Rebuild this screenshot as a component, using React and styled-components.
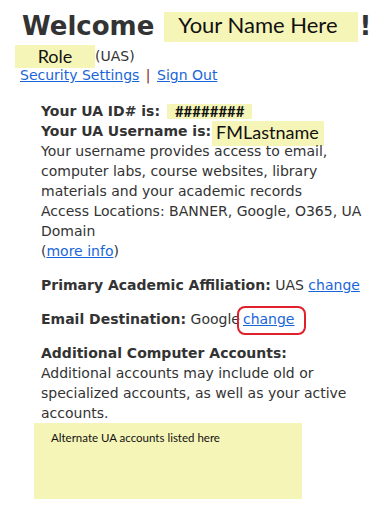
import React from "react";
import styled, { createGlobalStyle } from "styled-components";

const Global = createGlobalStyle`
  html, body { margin: 0; padding: 0; background: #fff; }
  body { font-family: "DejaVu Sans", Verdana, sans-serif; color: #333; }
`;

const HL = "#f6f5b8";

const Page = styled.div`
  width: 391px;
  height: 510px;
  box-sizing: border-box;
  padding: 11px 0 0 20px;
  overflow: hidden;
`;

const HeaderRow = styled.div`
  display: flex;
  align-items: flex-start;
  height: 34px;
`;

const Welcome = styled.h1`
  margin: 0 0 0 2px;
  font-family: "DejaVu Sans", Verdana, sans-serif;
  font-size: 26px;
  line-height: 30px;
  font-weight: bold;
  color: #333;
`;

const NameBox = styled.span`
  margin: 1px 2px 0 10px;
  padding: 0 20px 4px 14px;
  background: ${HL};
  font-family: Lato, "Open Sans", sans-serif;
  font-size: 22px;
  line-height: 26px;
  color: #111;
`;

const Bang = styled.span`
  font-size: 26px;
  line-height: 30px;
  font-weight: bold;
  color: #333;
`;

const RoleRow = styled.div`
  display: flex;
  align-items: flex-start;
  margin-left: -5px;
  height: 23px;
`;

const RoleBox = styled.span`
  width: 80px;
  text-align: center;
  background: ${HL};
  font-family: Lato, "Open Sans", sans-serif;
  font-size: 18px;
  line-height: 23px;
  color: #111;
`;

const Muted = styled.span`
  font-size: 14px;
  line-height: 23px;
  color: #333;
`;

const LinkRow = styled.div`
  font-size: 14px;
  line-height: 14px;
`;

const Link = styled.a`
  color: #1a66d8;
  text-decoration: underline;
  cursor: pointer;
`;

const Sep = styled.span`
  color: #8a2a1e;
  margin: 0 2px;
`;

const Content = styled.div`
  margin: 19px 0 0 21px;
  width: 335px;
  font-size: 14px;
  line-height: 20px;
  color: #333;
`;

const Para = styled.p`
  margin: 0;
  & + & { margin-top: 14px; }
`;

const Label = styled.b`
  font-weight: bold;
`;

const HashBox = styled.span`
  display: inline-block;
  margin-left: 2px;
  padding: 0 7px 0 8px;
  height: 15px;
  line-height: 15px;
  vertical-align: -1px;
  background: ${HL};
  font-family: Lato, "Open Sans", sans-serif;
  font-size: 15px;
  font-weight: bold;
  color: #111;
`;

const UserBox = styled.span`
  margin-left: 1px;
  padding: 0 5px 3px 4px;
  background: ${HL};
  font-family: Lato, "Open Sans", sans-serif;
  font-size: 18px;
  line-height: 18px;
  vertical-align: -3px;
  color: #111;
`;

const UserLine = styled.span`
  display: inline-block;
  height: 21px;
`;

const Ringed = styled.span`
  position: relative;
  margin-left: 3px;
`;

const Ring = styled.span`
  position: absolute;
  left: -6px;
  right: -12px;
  top: -5px;
  bottom: -8px;
  border: 2.5px solid #e0202c;
  border-radius: 8px;
  pointer-events: none;
`;

const AltBox = styled.div`
  margin-left: -7px;
  width: 268px;
  height: 76px;
  box-sizing: border-box;
  padding: 8px 0 0 17px;
  background: ${HL};
  font-family: Lato, "Open Sans", sans-serif;
  font-size: 11.5px;
  line-height: 14px;
  color: #111;
`;

export default function App() {
  return (
    <Page>
      <Global />
      <HeaderRow>
        <Welcome>Welcome</Welcome>
        <NameBox>Your Name Here</NameBox>
        <Bang>!</Bang>
      </HeaderRow>
      <RoleRow>
        <RoleBox>Role</RoleBox>
        <Muted>(UAS)</Muted>
      </RoleRow>
      <LinkRow>
        <Link>Security Settings</Link>
        <Sep> | </Sep>
        <Link>Sign Out</Link>
      </LinkRow>
      <Content>
        <Para>
          <Label>Your UA ID# is: </Label>
          <HashBox>########</HashBox>
          <br />
          <Label>Your UA Username is:</Label>
          <UserBox>FMLastname</UserBox>
          <br />
          Your username provides access to email, computer labs, course
          websites, library materials and your academic records
          <br />
          Access Locations: BANNER, Google, O365, UA Domain
          <br />
          (<Link>more info</Link>)
        </Para>
        <Para>
          <Label>Primary Academic Affiliation:</Label> UAS <Link>change</Link>
        </Para>
        <Para>
          <Label>Email Destination:</Label> Google
          <Ringed>
            <Link>change</Link>
            <Ring />
          </Ringed>
        </Para>
        <Para>
          <Label>Additional Computer Accounts:</Label>
          <br />
          Additional accounts may include old or specialized accounts, as well
          as your active accounts.
        </Para>
        <AltBox>Alternate UA accounts listed here</AltBox>
      </Content>
    </Page>
  );
}
